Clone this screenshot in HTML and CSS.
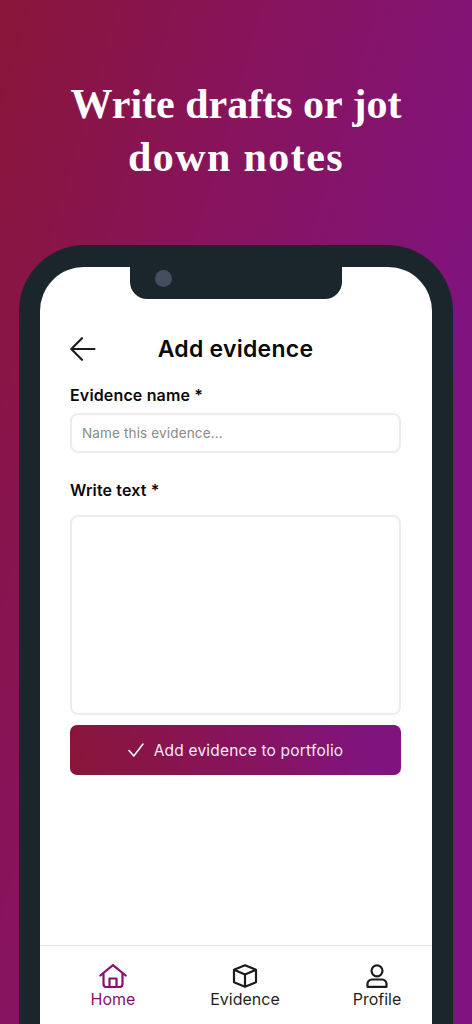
FILE: index.html
```html
<!DOCTYPE html>
<html lang="en">
<head>
<meta charset="utf-8">
<title>Add evidence</title>
<link rel="stylesheet" href="styles.css">
</head>
<body>
<div class="page">
  <h1 class="headline"><span class="line">Write drafts or jot</span><span class="line line-wide">down notes</span></h1>
  <div class="phone">
    <div class="screen">
      <div class="notch"><span class="camera"></span></div>
      <div class="content">
        <header class="topbar">
          <svg class="back" viewBox="0 0 26 24" width="26" height="24" fill="none" stroke="#1c1c1e" stroke-width="2.200" stroke-linecap="round" stroke-linejoin="round"><path d="M12 1.200 1.300 12 12 22.800M1.300 12H24.500"/></svg>
          <h2 class="title">Add evidence</h2>
        </header>
        <label class="label">Evidence name *</label>
        <div class="input"><span class="placeholder">Name this evidence...</span></div>
        <label class="label label-second">Write text *</label>
        <div class="textarea"></div>
        <button class="submit">
          <svg viewBox="0 0 16 14" width="16" height="14" fill="none" stroke="#fff" stroke-width="1.500" stroke-linecap="round" stroke-linejoin="round"><path d="M1 7.500 5.800 13 15 1"/></svg>
          <span>Add evidence to portfolio</span>
        </button>
      </div>
      <nav class="tabbar">
        <div class="tab tab-active">
          <svg viewBox="0 0 28 24" width="28" height="24" fill="none" stroke="#8a0f6e" stroke-width="2.200" stroke-linecap="round" stroke-linejoin="round"><path d="M1.300 11.500 14 1.200l12.700 10.300M4.500 9.500v10.500a3 3 0 0 0 3 3h13a3 3 0 0 0 3-3V9.500"/><path d="M10.500 23v-8.500h7V23"/></svg>
          <span>Home</span>
        </div>
        <div class="tab">
          <svg viewBox="0 0 26 24" width="26" height="24" fill="none" stroke="#1c1c1e" stroke-width="2.200" stroke-linejoin="round"><path d="M13 1.200 24 5.800v12.400L13 22.800 2 18.200V5.800z"/><path d="M2 5.800 13 10.500 24 5.800M13 10.500v12.300"/></svg>
          <span>Evidence</span>
        </div>
        <div class="tab">
          <svg viewBox="0 0 22 24" width="22" height="24" fill="none" stroke="#1c1c1e" stroke-width="2.200" stroke-linejoin="round"><circle cx="11" cy="6.800" r="5.500"/><path d="M6 15.500h10a4.500 4.500 0 0 1 4.500 4.500v2.800h-19V20A4.500 4.500 0 0 1 6 15.500z"/></svg>
          <span>Profile</span>
        </div>
      </nav>
    </div>
  </div>
</div>
</body>
</html>
```

FILE: styles.css
```css
* { box-sizing: border-box; }
html, body { margin: 0; padding: 0; height: 100%; }
body { overflow: hidden; font-family: Inter, "Noto Sans", sans-serif; }

.page {
  width: 472px;
  height: 1024px;
  overflow: hidden;
  padding-top: 78px;
  background: linear-gradient(106deg, #8a1538 0%, #87145c 35%, #801380 75%);
}

.headline {
  margin: 0;
  font-family: "Liberation Serif", serif;
  font-weight: 700;
  font-size: 42px;
  line-height: 53px;
  color: #fff;
  text-align: center;
}

.line { display: block; }
.line-wide { letter-spacing: 1.400px; }

.phone {
  margin: 61px 19px 0;
  height: 800px;
  padding: 22px 21px 0;
  background: #1b262c;
  border-radius: 66px 66px 0 0;
}

.screen {
  position: relative;
  height: 757px;
  background: #fff;
  border-radius: 44px 44px 0 0;
  display: flex;
  flex-direction: column;
}

.notch {
  position: absolute;
  top: 0;
  left: 90px;
  width: 212px;
  height: 32px;
  background: #1b262c;
  border-radius: 0 0 17px 17px;
}

.camera {
  position: absolute;
  left: 25px;
  top: 3px;
  width: 17px;
  height: 17px;
  border-radius: 50%;
  background: #434f5f;
}

.content {
  flex: 1;
  padding: 0 31px 0 30px;
  display: flex;
  flex-direction: column;
}

.topbar {
  position: relative;
  margin-top: 66px;
  height: 32px;
  display: flex;
  align-items: center;
  justify-content: center;
}

.back { position: absolute; left: 0; top: 4px; }

.title {
  margin: 0;
  font-size: 23px;
  font-weight: 600;
  letter-spacing: 0.250px;
  color: #0a0a0a;
}

.label {
  display: block;
  margin-top: 20px;
  font-size: 16px;
  line-height: 20px;
  font-weight: 600;
  letter-spacing: 0.150px;
  color: #0a0a0a;
}

.label-second { margin-top: 27px; }

.input {
  margin-top: 8px;
  height: 40px;
  padding: 0 10px;
  display: flex;
  align-items: center;
  background: #fff;
  border: 2px solid #ececec;
  border-radius: 8px;
}

.placeholder { font-size: 13.500px; color: #8a8a8a; letter-spacing: 0.150px; }

.textarea {
  margin-top: 15px;
  height: 200px;
  border: 2px solid #ececec;
  border-radius: 8px;
}

.submit {
  margin: 10px 0 0;
  height: 50px;
  width: 100%;
  border: 0;
  border-radius: 7px;
  display: flex;
  align-items: center;
  justify-content: center;
  gap: 10px;
  font-family: inherit;
  font-size: 15.500px;
  letter-spacing: 0.200px;
  color: #f6eaf3;
  background: linear-gradient(72deg, #8a1538 0%, #87145c 50%, #81137f 90%);
}

.tabbar {
  height: 79px;
  display: grid;
  grid-template-columns: repeat(3, 132px);
  border-top: 1.500px solid #e6e6e6;
  padding: 18px 0 0 7px;
  flex: none;
}

.tab {
  display: flex;
  flex-direction: column;
  align-items: center;
  gap: 1px;
  font-size: 16px;
  line-height: 20px;
  color: #1f1f1f;
}

.tab-active { color: #8a0f6e; }
.tab svg { display: block; }
```
